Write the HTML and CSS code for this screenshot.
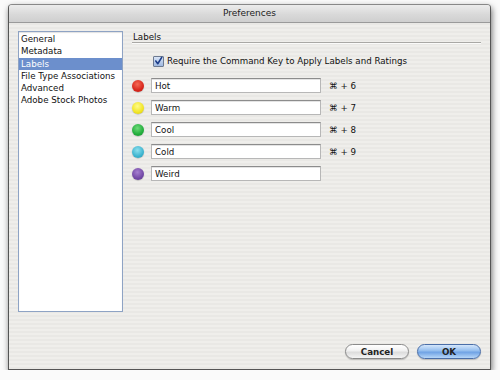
FILE: index.html
```html
<!DOCTYPE html>
<html lang="en">
<head>
  <meta charset="UTF-8" />
  <title>Preferences</title>
  <link rel="stylesheet" href="styles.css">
</head>
<body>
  <div class="prefs-window">
    <div class="prefs-titlebar">Preferences</div>
    <div class="prefs-body">
      <ul class="prefs-list">
        <li>General</li>
        <li>Metadata</li>
        <li class="selected">Labels</li>
        <li>File Type Associations</li>
        <li>Advanced</li>
        <li>Adobe Stock Photos</li>
      </ul>
      <div class="prefs-pane">
        <div class="pane-title">Labels</div>
        <label class="check-row">
          <span class="check-box">
            <svg width="10" height="10" viewBox="0 0 10 10"><path d="M2 5 L4.2 8 L8.6 1" fill="none" stroke="#1f3f8a" stroke-width="1.8" stroke-linecap="round" stroke-linejoin="round"/></svg>
          </span>
          Require the Command Key to Apply Labels and Ratings
        </label>
        <div class="label-rows">
          <div class="label-row">
            <span class="dot dot-red"></span>
            <input class="label-field" type="text" value="Hot">
            <span class="shortcut">⌘ + 6</span>
          </div>
          <div class="label-row">
            <span class="dot dot-yellow"></span>
            <input class="label-field" type="text" value="Warm">
            <span class="shortcut">⌘ + 7</span>
          </div>
          <div class="label-row">
            <span class="dot dot-green"></span>
            <input class="label-field" type="text" value="Cool">
            <span class="shortcut">⌘ + 8</span>
          </div>
          <div class="label-row">
            <span class="dot dot-cyan"></span>
            <input class="label-field" type="text" value="Cold">
            <span class="shortcut">⌘ + 9</span>
          </div>
          <div class="label-row">
            <span class="dot dot-purple"></span>
            <input class="label-field" type="text" value="Weird">
          </div>
        </div>
      </div>
    </div>
    <div class="prefs-footer">
      <button class="aqua-btn">Cancel</button>
      <button class="aqua-btn default">OK</button>
    </div>
  </div>
</body>
</html>
```

FILE: styles.css
```css
body {
  margin: 0;
  background: #fafafa;
  font-family: 'DejaVu Sans', 'Liberation Sans', sans-serif;
  font-size: 8.7px;
  color: #111;
}
.prefs-window {
  margin: 4px 0 0 8px;
  width: 483px;
  height: 366px;
  display: flex;
  flex-direction: column;
  border: 1px solid #555;
  border-top-color: #888;
  border-radius: 4px 4px 0 0;
  box-shadow: 1px 3px 6px rgba(0,0,0,0.55);
  background: repeating-linear-gradient(180deg, #efeeeb 0 2px, #e9e8e5 2px 4px);
  box-sizing: border-box;
  overflow: hidden;
}
.prefs-titlebar {
  height: 17px;
  line-height: 17px;
  text-align: center;
  font-size: 9px;
  color: #222;
  background: linear-gradient(180deg, #ececec 0%, #d9d9d9 55%, #cfcfcf 100%);
  border-bottom: 1px solid #9a9a9a;
}
.prefs-body {
  flex: 1;
  display: flex;
  gap: 9px;
  padding: 8px 9px 0 9px;
}
.prefs-list {
  list-style: none;
  margin: 0;
  padding: 1px 0 0 0;
  width: 105px;
  height: 281px;
  box-sizing: border-box;
  background: #fff;
  border: 1px solid #8ea3c4;
  box-shadow: inset 0 1px 1px rgba(0,0,0,0.12);
}
.prefs-list li {
  height: 12.3px;
  line-height: 12.3px;
  padding-left: 2px;
  white-space: nowrap;
}
.prefs-list li.selected {
  background: #6c8fcc;
  color: #fff;
}
.prefs-pane {
  flex: 1;
  display: flex;
  flex-direction: column;
  padding-right: 0;
}
.pane-title {
  padding: 2px 0 0 1px;
  height: 9px;
  line-height: 9px;
  border-bottom: 1px solid #a9a8a5;
  box-shadow: 0 1px 0 #fbfbfa;
}
.check-row {
  display: flex;
  align-items: center;
  gap: 3px;
  margin: 13px 0 0 21px;
  height: 10px;
}
.check-box {
  width: 9px;
  height: 9px;
  border: 1px solid #6d7a90;
  background: linear-gradient(180deg, #d8e4f6, #9fb8e0);
  display: flex;
  align-items: center;
  justify-content: center;
  border-radius: 1px;
}
.label-rows {
  display: flex;
  flex-direction: column;
  gap: 7px;
  margin-top: 12px;
}
.label-row {
  display: flex;
  align-items: center;
  height: 15px;
}
.dot {
  width: 12px;
  height: 12px;
  border-radius: 50%;
  box-sizing: border-box;
  margin-right: 7px;
  box-shadow: 0 0.5px 1px rgba(0,0,0,0.3);
}
.dot-red { background: radial-gradient(circle at 45% 35%, #f56a55, #d8261c 60%, #b51a14); }
.dot-yellow { background: radial-gradient(circle at 45% 35%, #fffb8a, #f1e524 60%, #c9b90f); }
.dot-green { background: radial-gradient(circle at 45% 35%, #6edb78, #22ad3c 60%, #148c2a); }
.dot-cyan { background: radial-gradient(circle at 45% 35%, #8ee0ee, #3db4cf 60%, #2494ad); }
.dot-purple { background: radial-gradient(circle at 45% 35%, #a67fd0, #7349a6 60%, #583488); }
.label-field {
  width: 170px;
  height: 15px;
  box-sizing: border-box;
  margin: 0;
  padding: 0 3px;
  border: 1px solid #b7b7b7;
  border-top-color: #8c8c8c;
  background: #fff;
  font-family: inherit;
  font-size: 8.7px;
  color: #111;
  box-shadow: inset 0 1px 0 #e4e4e4;
}
.shortcut {
  margin-left: 8px;
  white-space: nowrap;
}
.prefs-footer {
  display: flex;
  justify-content: flex-end;
  gap: 8px;
  padding: 0 9px 10px 0;
}
.aqua-btn {
  width: 64px;
  height: 15px;
  padding: 0;
  border-radius: 8px;
  font-family: inherit;
  font-size: 8.7px;
  font-weight: bold;
  color: #222;
  border: 1px solid #8a8a8a;
  background: linear-gradient(180deg, #ffffff 0%, #f1f1f1 45%, #dcdcdc 55%, #f4f4f4 100%);
  box-shadow: 0 1px 1px rgba(0,0,0,0.2);
}
.aqua-btn.default {
  border-color: #4a6ea8;
  background: linear-gradient(180deg, #d4e6fb 0%, #93bdee 45%, #6fa2e4 55%, #b6d6f8 100%);
}
```
